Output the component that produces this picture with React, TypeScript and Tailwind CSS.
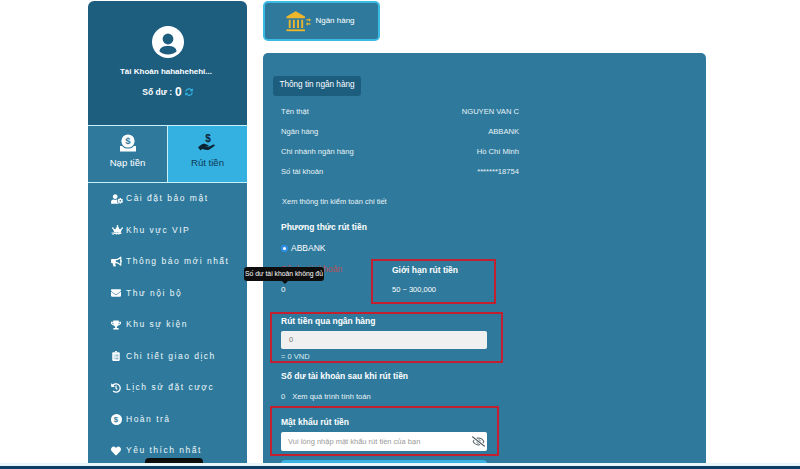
import React from "react";
import { FaUserCog, FaCrown, FaBullhorn, FaEnvelope, FaTrophy, FaClipboardList, FaHistory, FaHeart, FaSyncAlt, FaRegEyeSlash } from "react-icons/fa";

const DollarCircle = () => (
  <svg width="11" height="11" viewBox="0 0 12 12">
    <circle cx="6" cy="6" r="6" fill="#fff" />
    <text x="6" y="9" textAnchor="middle" fontSize="8.5" fontWeight="700" fill="#2f7a9c" fontFamily="Liberation Sans">$</text>
  </svg>
);

const VipCrown = () => (
  <span className="relative flex h-[12px] w-[12px] flex-col items-center">
    <FaCrown size={11} color="#fff" />
    <span className="absolute top-[8px] text-[4px] font-bold leading-none text-white">VIP</span>
  </span>
);

const menu: [React.ReactNode, string][] = [
  [<FaUserCog size={12} color="#fff" />, "Cài đặt bảo mật"],
  [<VipCrown />, "Khu vực VIP"],
  [<FaBullhorn size={11} color="#fff" />, "Thông báo mới nhất"],
  [<FaEnvelope size={10} color="#fff" />, "Thư nội bộ"],
  [<FaTrophy size={10} color="#fff" />, "Khu sự kiện"],
  [<FaClipboardList size={10} color="#fff" />, "Chi tiết giao dịch"],
  [<FaHistory size={10} color="#fff" />, "Lịch sử đặt cược"],
  [<DollarCircle />, "Hoàn trả"],
  [<FaHeart size={10} color="#fff" />, "Yêu thích nhất"],
];

const rows = [
  ["Tên thật", "NGUYEN VAN C"],
  ["Ngân hàng", "ABBANK"],
  ["Chi nhánh ngân hàng", "Hồ Chí Minh"],
  ["Số tài khoản", "*******18754"],
];

const Avatar = () => (
  <svg width="32" height="32" viewBox="0 0 32 32">
    <circle cx="16" cy="16" r="16" fill="#fff" />
    <circle cx="16" cy="13" r="5.4" fill="#1d5e7f" />
    <path d="M7.5 25.5c0-3.6 3-5.6 8.5-5.6s8.5 2 8.5 5.6c-2.2 1.9-5.2 3-8.5 3s-6.3-1.1-8.5-3z" fill="#1d5e7f" />
  </svg>
);

const DepositIcon = () => (
  <svg width="18" height="18" viewBox="0 0 18 18">
    <circle cx="9" cy="7" r="6.6" fill="#fff" />
    <text x="9" y="10.4" textAnchor="middle" fontSize="9.5" fontWeight="700" fill="#2f7a9c" fontFamily="Liberation Sans">$</text>
    <path d="M1 12h2.2c1 1.6 3 2.6 5.8 2.6s4.800-1 5.800-2.600H17v5.500H1z" fill="#fff" />
  </svg>
);

const WithdrawIcon = () => (
  <svg width="19" height="18" viewBox="0 0 19 18">
    <text x="10" y="8" textAnchor="middle" fontSize="10" fontWeight="700" fill="#0b2233" fontFamily="Liberation Sans">$</text>
    <path d="M0 13.200 3.600 10.400c1.200-.8 2.400-.9 3.600-.4l2.600.9c1 .3 1.300 1.500.1 1.700l-3 .1 3.400.4 5.200-2.500c1-.4 1.900.8.9 1.500l-5 3.500c-.9.500-1.800.6-2.700.4L4 15l-1.500 1.500z" fill="#0b2233" />
  </svg>
);

const BankIcon = () => (
  <svg width="25" height="21" viewBox="0 0 27 22">
    <path d="M10.500 0 20.500 5.500V7.500H.5V5.500z" fill="#eeb62b" />
    <path d="M3 9h2v9H3zM7.500 9h2v9h-2zM12 9h2v9h-2zM16.500 9h2v9h-2z" fill="#eeb62b" />
    <path d="M.5 19.500h20V21.500H.5z" fill="#eeb62b" />
    <path d="M22 8.500h3l-.1-1.200 2 2-2 1.900v-1.200h-2.900zM26.500 12.800h-3v-1.200l-2 2 2 1.900v-1.200h3z" fill="#eeb62b" />
  </svg>
);

function Section({ className, children }: { className: string; children: React.ReactNode }) {
  return <div className={className}>{children}</div>;
}

export default function App() {
  return (
    <div className="relative flex h-[469px] w-[800px] flex-col overflow-hidden bg-white font-['Liberation_Sans',Arial,sans-serif]">
      <div className="flex h-[463px] gap-[16px] pl-[88px] pt-px">
        {/* sidebar */}
        <aside className="relative flex w-[159px] flex-col overflow-hidden rounded-t-[6px]">
          <div className="flex h-[124px] shrink-0 flex-col items-center bg-[#1d5e7f] pt-[25px] text-white">
            <Avatar />
            <div className="mt-[8px] pr-[3px] text-[8px] font-bold leading-[12px]">Tài Khoản hahahehehi...</div>
            <div className="mt-[5px] flex items-center gap-[3px] text-[8.5px] font-bold leading-[18px]">
              <span>Số dư :</span>
              <span className="text-[12px]">0</span>
              <FaSyncAlt size={8} color="#34b1e0" />
            </div>
          </div>
          <div className="flex h-[58px] shrink-0 border-y border-[#c9f0f7]">
            <div className="flex flex-1 flex-col items-center border-r border-[#c9f0f7] bg-[#2f7a9c] pt-[8px] text-white">
              <DepositIcon />
              <span className="mt-[4px] text-[9.6px] leading-[14px]">Nạp tiền</span>
            </div>
            <div className="flex flex-1 flex-col items-center bg-[#34b1e0] pt-[8px] text-[#0f3a55]">
              <WithdrawIcon />
              <span className="mt-[4px] text-[9.6px] leading-[14px]">Rút tiền</span>
            </div>
          </div>
          <nav className="flex-1 bg-[#2f7a9c]">
            {menu.map(([icon, label]) => (
              <div key={label} className="flex h-[31.5px] items-center pl-[23px] text-[8.5px] tracking-[1.5px] text-[#eef7fa]">
                <span className="flex w-[15px] shrink-0 items-center">{icon}</span>
                <span className="whitespace-nowrap">{label}</span>
              </div>
            ))}
          </nav>
          <div className="absolute bottom-0 left-[57px] h-[5px] w-[58px] rounded-t-[4px] bg-[#0d0d0d]" />
        </aside>

        {/* main */}
        <main className="flex w-[443px] flex-col">
          <div className="flex h-[40px] w-[117px] items-center justify-center gap-[4px] rounded-[5px] border-2 border-[#3bbbe3] bg-[#2f7a9c] pr-[2px]">
            <BankIcon />
            <span className="text-[8px] text-white">Ngân hàng</span>
          </div>
          <section className="relative mt-[12px] flex-1 overflow-hidden rounded-t-[5px] bg-[#2f7a9c] pl-[10px] pt-[23px] text-white">
            <div className="flex h-[20px] w-[88px] items-center justify-center whitespace-nowrap rounded-[3px] bg-[#1d5e7f] pb-px text-[8.2px]">Thông tin ngân hàng</div>
            <div className="mt-[6px] w-[246px] pl-[8px]">
              {rows.map(([a, b]) => (
                <div key={a} className="flex h-[20px] items-center justify-between text-[7.6px] text-[#e8f3f7]">
                  <span>{a}</span>
                  <span>{b}</span>
                </div>
              ))}
            </div>
            <div className="mt-[10px] pl-[9px] text-[7.5px] leading-[20px] text-[#e8f3f7]">Xem thông tin kiểm toán chi tiết</div>
            <div className="mt-[8px] pl-[8px] text-[8.5px] font-bold leading-[14px]">Phương thức rút tiền</div>
            <div className="mt-[7px] flex h-[14px] items-center pl-[8px] text-[8.5px]">
              <span className="mr-[3px] h-[7px] w-[7px] rounded-full border-2 border-[#2f8fe8] bg-white" />
              ABBANK
            </div>
            <div className="mt-[7px] flex pl-[8px]">
              <div className="w-[111px]">
                <div className="whitespace-nowrap text-[8.7px] leading-[14px] text-[#b8505a]">Số dư tài khoản</div>
                <div className="mt-[7px] text-[8px] leading-[14px]">0</div>
              </div>
              <div className="pt-px">
                <div className="text-[8.5px] font-bold leading-[14px]">Giới hạn rút tiền</div>
                <div className="mt-[6px] text-[7.5px] leading-[14px]">50 ~ 300,000</div>
              </div>
            </div>
            <div className="mt-[17px] pl-[8px] text-[8.5px] font-bold leading-[14px]">Rút tiền qua ngân hàng</div>
            <div className="ml-[8px] mt-[3px] flex h-[18px] w-[206px] items-center rounded-[2px] bg-[#f0f0f0] pl-[8px] text-[7.5px] text-[#777]">0</div>
            <div className="ml-[8px] mt-[2px] text-[7.5px] leading-[12px] text-[#dcebf1]">= 0 VND</div>
            <div className="mt-[6px] pl-[8px] text-[8.5px] font-bold leading-[14px]">Số dư tài khoản sau khi rút tiền</div>
            <div className="mt-[7px] flex gap-[7px] pl-[8px] text-[7.5px] leading-[14px] text-[#e8f3f7]">
              <span>0</span>
              <span>Xem quá trình tính toán</span>
            </div>
            <div className="mt-[11px] pl-[8px] text-[8.5px] font-bold leading-[14px]">Mật khẩu rút tiền</div>
            <div className="ml-[8px] mt-[3px] flex h-[19px] w-[206px] items-center justify-between rounded-[2px] bg-white pl-[7px] pr-[2px] text-[7.5px] text-[#9a9a9a]">
              <span>Vui lòng nhập mật khẩu rút tiền của bạn</span>
              <FaRegEyeSlash size={13} color="#4a5a60" />
            </div>
            <div className="ml-[8px] mt-[9px] h-[10px] w-[206px] rounded-t-[4px] bg-[#38b3e2]" />

            <Section className="pointer-events-none absolute left-[108px] top-[206px] h-[45px] w-[125px] border-2 border-[#c2202e]">{null}</Section>
            <Section className="pointer-events-none absolute left-[7px] top-[259px] h-[51px] w-[233px] border-2 border-[#c2202e]">{null}</Section>
            <Section className="pointer-events-none absolute left-[7px] top-[353px] h-[50px] w-[229px] border-2 border-[#c2202e]">{null}</Section>
          </section>
        </main>
      </div>
      <div className="h-[3px] bg-[#e6f6fa]" />
      <div className="flex-1 bg-[#0c3d66]" />

      {/* tooltip */}
      <div className="absolute left-[244px] top-[267px] flex h-[14px] w-[80px] items-center justify-center whitespace-nowrap rounded-[3px] bg-[#0d0d0d] text-[6.8px] text-white">
        Số dư tài khoản không đủ
        <span className="absolute -bottom-[3px] left-[38px] h-0 w-0 border-x-[3px] border-t-[3px] border-x-transparent border-t-[#0d0d0d]" />
      </div>
    </div>
  );
}
